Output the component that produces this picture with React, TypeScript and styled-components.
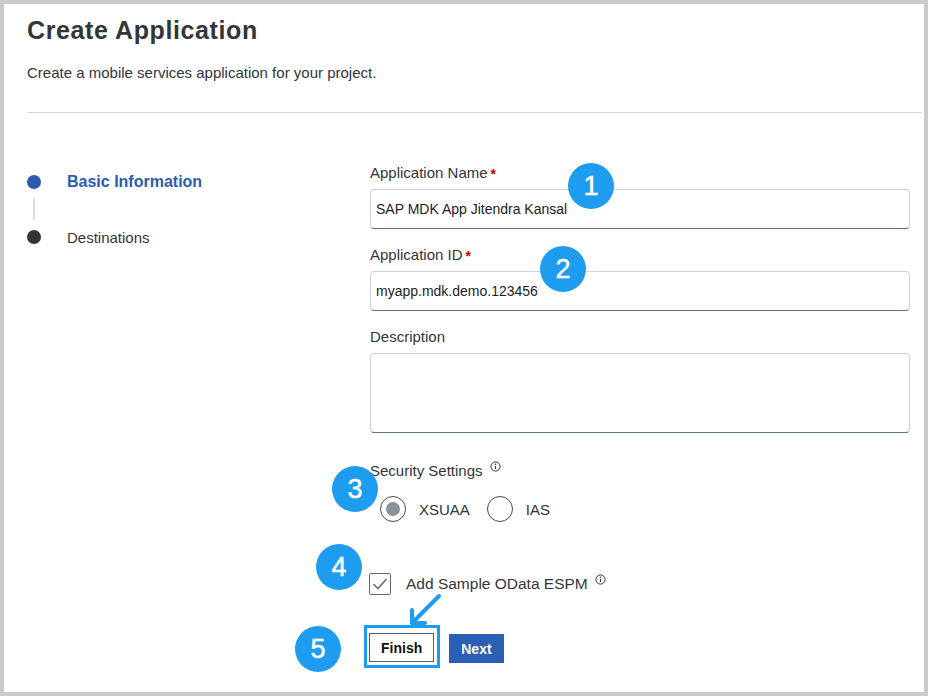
import React from 'react'
import styled, { createGlobalStyle } from 'styled-components'

const GlobalStyle = createGlobalStyle`
  html, body {
    margin: 0;
    padding: 0;
    background: #cbcbcb;
  }
  * {
    box-sizing: border-box;
  }
`

const Page = styled.div`
  width: 928px;
  height: 696px;
  padding: 4px 4px 4px 4px;
  background: #cbcbcb;
  font-family: 'Liberation Sans', Arial, sans-serif;
  color: #32363a;
`

const Card = styled.div`
  position: relative;
  width: 920px;
  height: 688px;
  background: #fff;
  overflow: hidden;
`

const Header = styled.div`
  padding: 11px 2px 0 23px;
`

const Title = styled.h1`
  margin: 0;
  font-size: 25px;
  line-height: 30px;
  font-weight: 700;
  letter-spacing: 0.6px;
  color: #32363a;
`

const Subtitle = styled.p`
  margin: 18px 0 0;
  font-size: 15px;
  line-height: 20px;
`

const Divider = styled.div`
  margin-top: 29px;
  height: 1px;
  background: #d8d8d8;
`

const Body = styled.div`
  display: flex;
  padding: 0 14px 0 23px;
`

const Steps = styled.div`
  width: 343px;
  padding-top: 59px;
  display: flex;
  flex-direction: column;
`

const Step = styled.div`
  display: flex;
  align-items: center;
  height: 20px;
  gap: 26px;
`

const StepDot = styled.span<{ $active?: boolean }>`
  width: 14px;
  height: 14px;
  border-radius: 50%;
  background: ${p => (p.$active ? '#2a5db0' : '#32363a')};
  flex-shrink: 0;
`

const StepLabel = styled.span<{ $active?: boolean }>`
  font-size: ${p => (p.$active ? '16px' : '15px')};
  font-weight: ${p => (p.$active ? 700 : 400)};
  color: ${p => (p.$active ? '#2a5db0' : '#32363a')};
`

const Connector = styled.div`
  width: 2px;
  height: 22px;
  margin: 6px 0 7px 6px;
  background: #dcdcdc;
`

const Form = styled.div`
  flex: 1;
  padding-top: 49px;
  display: flex;
  flex-direction: column;
`

const Label = styled.div`
  display: flex;
  align-items: center;
  height: 20px;
  font-size: 15px;
  margin-bottom: 7px;
`

const Required = styled.span`
  color: #bb0000;
  font-size: 14px;
  font-weight: 700;
  margin-left: 3px;
  line-height: 1;
  margin-top: 3px;
`

const Input = styled.div<{ $tall?: boolean }>`
  height: ${p => (p.$tall ? '80px' : '40px')};
  margin-bottom: ${p => (p.$tall ? '27px' : '15px')};
  border: 1px solid #cfd4d9;
  border-bottom: 1px solid #5b738b;
  border-radius: 4px;
  padding: 0 5px;
  display: flex;
  align-items: center;
  font-size: 14px;
  color: #1d1d1d;
`

const InfoMark = styled.svg`
  margin-left: 7px;
  align-self: flex-start;
  margin-top: 1px;
`

const RadioRow = styled.div`
  display: flex;
  align-items: center;
  margin-top: 9px;
  padding-left: 10px;
  height: 26px;
`

const RadioCircle = styled.span<{ $checked?: boolean }>`
  width: 26px;
  height: 26px;
  border-radius: 50%;
  border: 1.5px solid #4a4a4a;
  display: flex;
  align-items: center;
  justify-content: center;
  &::after {
    content: '';
    width: 14px;
    height: 14px;
    border-radius: 50%;
    background: ${p => (p.$checked ? '#8a929c' : 'transparent')};
  }
`

const RadioText = styled.span`
  font-size: 15px;
  margin: 0 17px 0 13px;
`

const CheckRow = styled.div`
  display: flex;
  align-items: center;
  margin-top: 51px;
  height: 22px;
`

const CheckBox = styled.span`
  width: 22px;
  height: 22px;
  border: 1px solid #6a6a6a;
  border-radius: 2px;
  display: flex;
  align-items: center;
  justify-content: center;
  margin-left: -1px;
`

const CheckText = styled.span`
  font-size: 15.5px;
  margin-left: 15px;
`

const Actions = styled.div`
  display: flex;
  align-items: flex-start;
  margin-top: 30px;
  margin-left: -6px;
  gap: 9px;
`

const Highlight = styled.div`
  border: 3px solid #1a9ff0;
  padding: 5px 3px 3px 2px;
`

const Button = styled.button<{ $primary?: boolean }>`
  height: 29px;
  padding: 0 11px;
  font-family: 'Liberation Sans', Arial, sans-serif;
  font-size: 14px;
  font-weight: 700;
  border-radius: 0;
  cursor: pointer;
  background: ${p => (p.$primary ? '#2b5fb3' : '#fff')};
  color: ${p => (p.$primary ? '#fff' : '#111')};
  border: 1px solid ${p => (p.$primary ? '#2b5fb3' : '#4d6184')};
  margin-top: ${p => (p.$primary ? '9px' : '0')};
`

const Badge = styled.div<{ $x: number; $y: number }>`
  position: absolute;
  left: ${p => p.$x - 27}px;
  top: ${p => p.$y - 27}px;
  width: 46px;
  height: 46px;
  border-radius: 50%;
  background: #1d9cf0;
  color: #fff;
  font-size: 27px;
  display: flex;
  align-items: center;
  justify-content: center;
  font-family: 'Liberation Sans', Arial, sans-serif;
  -webkit-text-stroke: 0.5px #fff;
`

const Arrow = styled.svg`
  position: absolute;
  left: 396px;
  top: 585px;
`

const Info = () => (
  <InfoMark width="11" height="11" viewBox="0 0 11 11">
    <circle cx="5.5" cy="5.5" r="4.6" fill="none" stroke="#32363a" strokeWidth="1" />
    <circle cx="5.5" cy="3.3" r="0.75" fill="#32363a" />
    <path d="M5.5 4.9 V8" stroke="#32363a" strokeWidth="1.1" />
  </InfoMark>
)

const badges = [
  { n: 1, x: 591, y: 186 },
  { n: 2, x: 563, y: 269 },
  { n: 3, x: 355, y: 489 },
  { n: 4, x: 339, y: 567 },
  { n: 5, x: 318, y: 649 }
]

export default function App() {
  return (
    <Page>
      <GlobalStyle />
      <Card>
        <Header>
          <Title>Create Application</Title>
          <Subtitle>Create a mobile services application for your project.</Subtitle>
          <Divider />
        </Header>
        <Body>
          <Steps>
            <Step>
              <StepDot $active />
              <StepLabel $active>Basic Information</StepLabel>
            </Step>
            <Connector />
            <Step>
              <StepDot />
              <StepLabel>Destinations</StepLabel>
            </Step>
          </Steps>
          <Form>
            <Label>
              Application Name<Required>*</Required>
            </Label>
            <Input>SAP MDK App Jitendra Kansal</Input>
            <Label>
              Application ID<Required>*</Required>
            </Label>
            <Input>myapp.mdk.demo.123456</Input>
            <Label>Description</Label>
            <Input $tall />
            <Label>
              Security Settings
              <Info />
            </Label>
            <RadioRow>
              <RadioCircle $checked />
              <RadioText>XSUAA</RadioText>
              <RadioCircle />
              <RadioText>IAS</RadioText>
            </RadioRow>
            <CheckRow>
              <CheckBox>
                <svg width="16" height="14" viewBox="0 0 16 14">
                  <path
                    d="M1.5 7 L6 11.5 L14.5 2"
                    fill="none"
                    stroke="#707070"
                    strokeWidth="1.7"
                  />
                </svg>
              </CheckBox>
              <CheckText>Add Sample OData ESPM</CheckText>
              <Info />
            </CheckRow>
            <Actions>
              <Highlight>
                <Button>Finish</Button>
              </Highlight>
              <Button $primary>Next</Button>
            </Actions>
          </Form>
        </Body>
        {badges.map(b => (
          <Badge key={b.n} $x={b.x} $y={b.y}>
            {b.n}
          </Badge>
        ))}
        <Arrow width="50" height="46" viewBox="0 0 50 46">
          <g fill="none" stroke="#1d9cf0" strokeWidth="4" strokeLinecap="round" strokeLinejoin="round">
            <path d="M39 7 L12 34" />
            <path d="M12 21 L12 34 L25 34" />
          </g>
        </Arrow>
      </Card>
    </Page>
  )
}
